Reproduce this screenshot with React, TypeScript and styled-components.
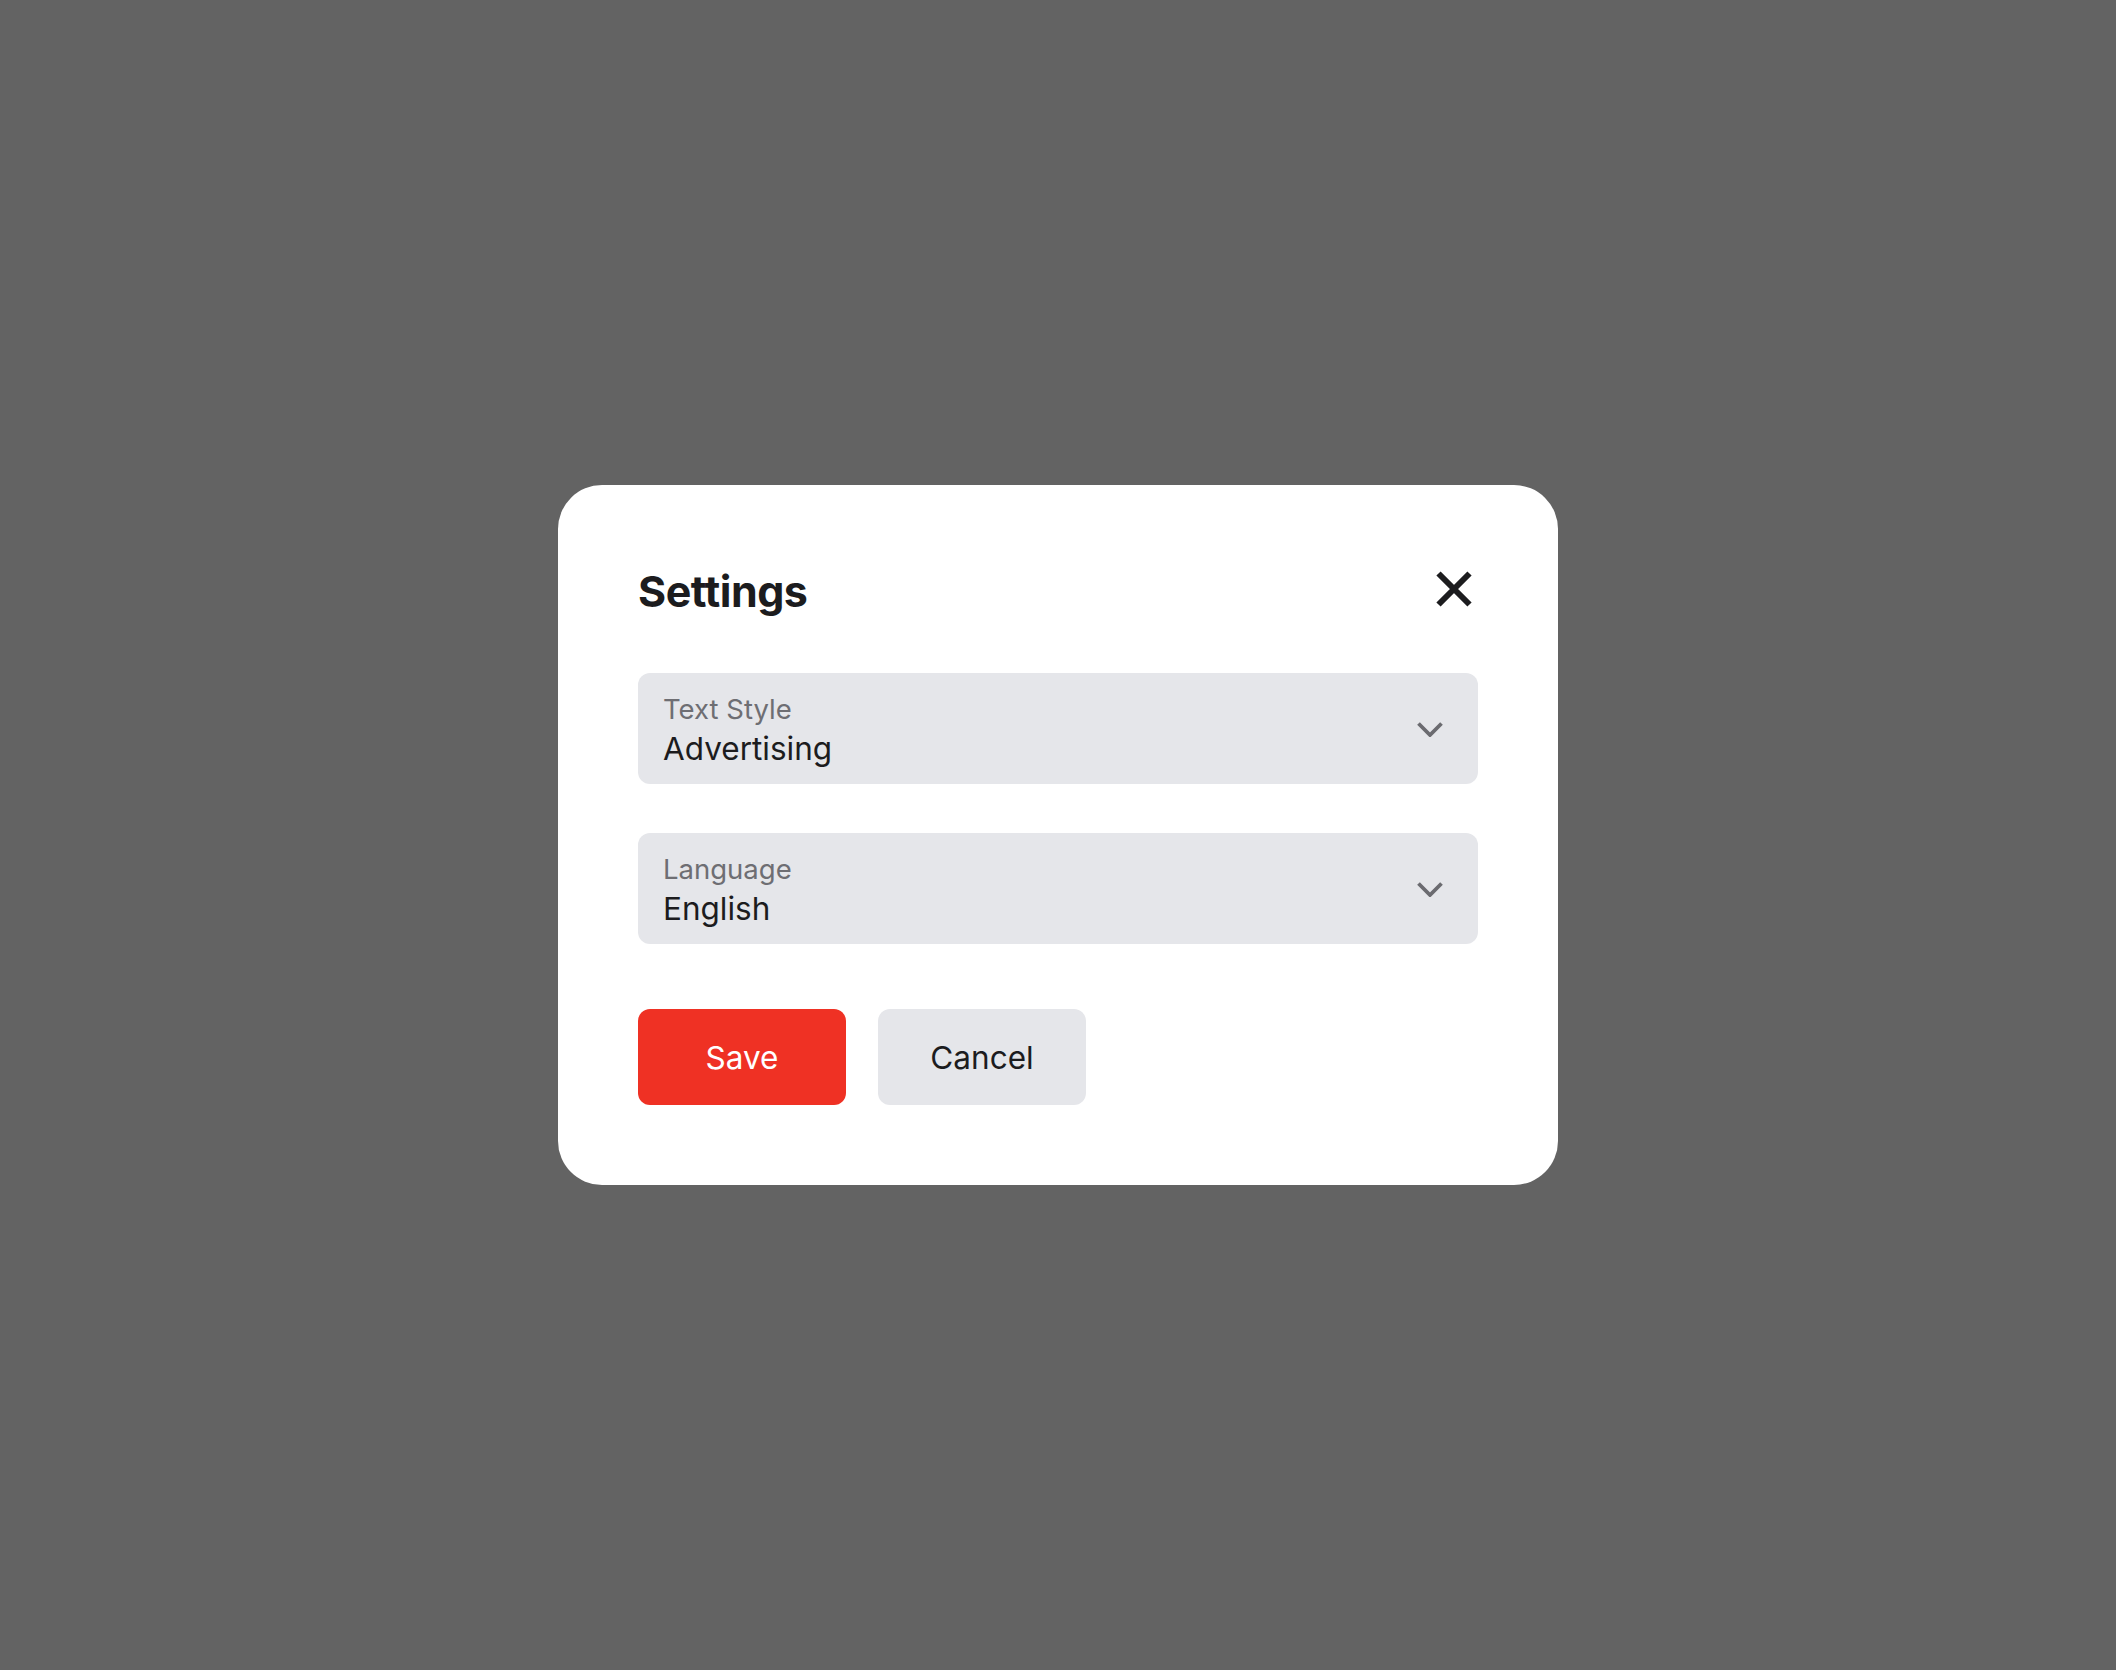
import styled, { createGlobalStyle } from "styled-components";

const GlobalStyle = createGlobalStyle`
  html, body {
    margin: 0;
    padding: 0;
    height: 100%;
  }
  body {
    background: #636363;
    font-family: Inter, "Noto Sans", "Liberation Sans", sans-serif;
    -webkit-font-smoothing: antialiased;
  }
  #root {
    height: 100%;
  }
`;

const Backdrop = styled.div`
  width: 100vw;
  height: 100vh;
  display: flex;
  align-items: center;
  justify-content: center;
`;

const Modal = styled.div`
  width: 1000px;
  box-sizing: border-box;
  padding: 80px;
  background: #ffffff;
  border-radius: 44px;
  display: flex;
  flex-direction: column;
`;

const Header = styled.div`
  display: flex;
  align-items: center;
  justify-content: space-between;
  height: 48px;
  margin-bottom: 60px;
`;

const Title = styled.h2`
  margin: 0;
  padding-top: 3px;
  font-size: 43px;
  line-height: 48px;
  font-weight: 700;
  letter-spacing: -0.5px;
  color: #1c1c1e;
`;

const CloseBtn = styled.button`
  width: 48px;
  height: 48px;
  padding: 0;
  border: none;
  background: transparent;
  color: #1c1c1e;
  display: inline-flex;
  align-items: center;
  justify-content: center;
  cursor: pointer;
`;

const Fields = styled.div`
  display: flex;
  flex-direction: column;
  gap: 49px;
`;

const Field = styled.button`
  height: 111px;
  box-sizing: border-box;
  padding: 0 34px 0 25px;
  border: none;
  border-radius: 12px;
  background: #e5e6ea;
  display: flex;
  align-items: center;
  justify-content: space-between;
  text-align: left;
  font-family: inherit;
  cursor: pointer;
`;

const FieldText = styled.div`
  display: flex;
  flex-direction: column;
  padding-top: 2px;
`;

const Label = styled.span`
  font-size: 27.5px;
  line-height: 34px;
  color: #6e6e73;
`;

const Value = styled.span`
  margin-top: 4px;
  font-size: 31.5px;
  line-height: 38px;
  color: #1c1c1e;
`;

const Actions = styled.div`
  display: flex;
  gap: 32px;
  margin-top: 65px;
`;

const Button = styled.button<{ $primary?: boolean }>`
  width: 208px;
  height: 96px;
  border: none;
  border-radius: 12px;
  font-family: inherit;
  font-size: 31.5px;
  font-weight: 400;
  background: ${(p) => (p.$primary ? "#ef3124" : "#e5e6ea")};
  color: ${(p) => (p.$primary ? "#ffffff" : "#1c1c1e")};
  cursor: pointer;
`;

function CloseIcon() {
  return (
    <svg width="48" height="48" viewBox="0 0 48 48" fill="none">
      <path d="M8.5 8.5 L39.5 39.5 M39.5 8.5 L8.5 39.5" stroke="currentColor" strokeWidth="6" />
    </svg>
  );
}

function Chevron() {
  return (
    <svg width="28" height="16" viewBox="0 0 28 16" fill="none">
      <path d="M2.5 2.5 L14 14 L25.5 2.5" stroke="#6b6b70" strokeWidth="3.8" />
    </svg>
  );
}

function Select({ label, value }: { label: string; value: string }) {
  return (
    <Field type="button">
      <FieldText>
        <Label>{label}</Label>
        <Value>{value}</Value>
      </FieldText>
      <Chevron />
    </Field>
  );
}

export default function App() {
  return (
    <>
      <GlobalStyle />
      <Backdrop>
        <Modal>
          <Header>
            <Title>Settings</Title>
            <CloseBtn aria-label="Close">
              <CloseIcon />
            </CloseBtn>
          </Header>
          <Fields>
            <Select label="Text Style" value="Advertising" />
            <Select label="Language" value="English" />
          </Fields>
          <Actions>
            <Button $primary>Save</Button>
            <Button>Cancel</Button>
          </Actions>
        </Modal>
      </Backdrop>
    </>
  );
}
